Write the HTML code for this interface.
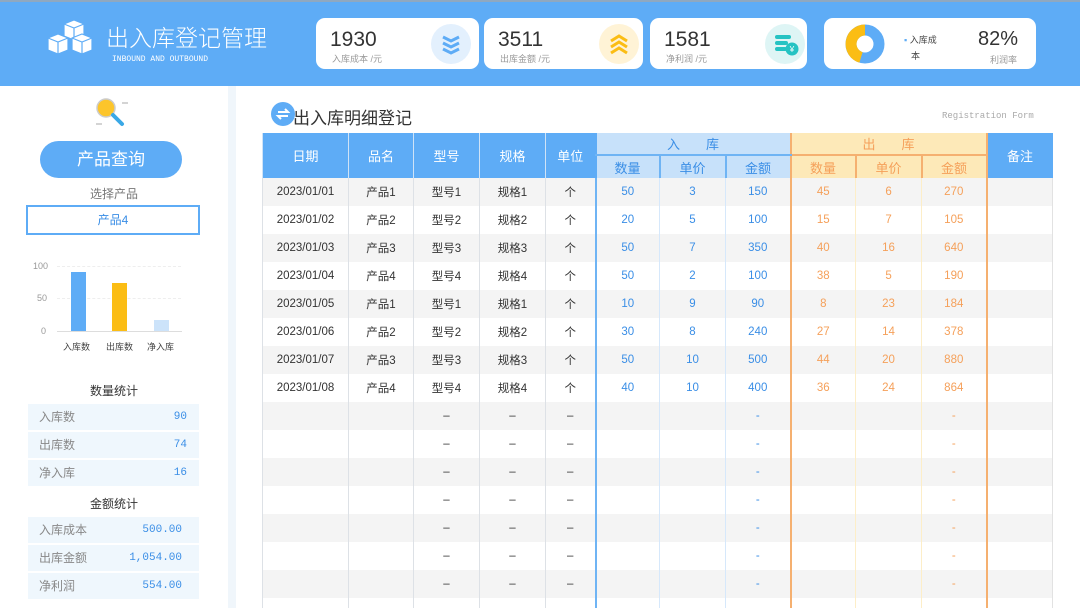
<!DOCTYPE html>
<html style="width:1080px;height:608px;overflow:hidden"><head><meta charset="utf-8"><style>
*{margin:0;padding:0;box-sizing:border-box}
body{width:1080px;height:608px;overflow:hidden;background:#fff;font-family:"Liberation Sans","Noto Sans CJK SC",sans-serif;position:relative}
.abs{position:absolute}
.hdr{left:0;top:0;width:1080px;height:86px;background:#5eacf6;border-top:2px solid #8fa8c0}
.card{background:#fff;border-radius:9px;top:18px;height:51px}
.num{position:absolute;left:14px;top:10px;font-size:21px;color:#333}
.lbl{position:absolute;left:16px;top:34px;font-size:9px;color:#999}
.ic{position:absolute;top:6px;width:40px;height:40px;border-radius:50%}
table{border-collapse:collapse;table-layout:fixed;font-size:12px}
td{text-align:center;height:28px;border-left:1px solid #dde1e6;color:#333;font-family:"Liberation Sans","Noto Sans CJK SC",sans-serif;font-size:11.5px}
tr.g td{background:#f4f4f4}
th{font-weight:normal;color:#fff;background:#5eacf6;border-left:1px solid #cfe3f7;font-size:13px}
.b{color:#3a8ee6}.o{color:#f5a05a}
.sl{left:28px;width:171px;height:26px;background:#eff7fd;font-size:12px;color:#888;line-height:26px}
.sl span{position:absolute;left:11px;top:0}
.sl b{position:absolute;right:12px;top:0;font-weight:normal;color:#3a8ee6;font-family:"Liberation Mono",monospace;font-size:11px}
</style></head><body>
<div class="abs hdr"></div>
<svg class="abs" style="left:46px;top:20px" width="56" height="44" viewBox="0 0 56 44">
<g fill="#fff" stroke="#5eacf6" stroke-width="1.2">
<path d="M18 4 L28 0 L38 4 L38 16 L28 20 L18 16Z"/><path d="M18 4 L28 8 L38 4 M28 8 L28 20" fill="none"/>
<path d="M2 18 L12 14 L22 18 L22 30 L12 34 L2 30Z"/><path d="M2 18 L12 22 L22 18 M12 22 L12 34" fill="none"/>
<path d="M26 18 L36 14 L46 18 L46 30 L36 34 L26 30Z"/><path d="M26 18 L36 22 L46 18 M36 22 L36 34" fill="none"/>
</g></svg>
<div class="abs" style="left:106px;top:19px;font-size:23px;color:#fff;font-family:'Noto Sans CJK SC',sans-serif;font-weight:300">出入库登记管理</div>
<div class="abs" style="left:112px;top:55px;font-size:8px;color:#fff;font-family:'Liberation Mono',monospace">INBOUND AND OUTBOUND</div>

<div class="abs card" style="left:316px;width:163px"><div class="num">1930</div><div class="lbl">入库成本 /元</div>
<div class="ic" style="left:115px;background:#e3f0fd"><svg width="40" height="40"><g fill="none" stroke="#5eacf6" stroke-width="3"><path d="M12 13 L20 17 L28 13 M12 19 L20 23 L28 19 M12 25 L20 29 L28 25"/></g></svg></div></div>
<div class="abs card" style="left:484px;width:159px"><div class="num">3511</div><div class="lbl">出库金额 /元</div>
<div class="ic" style="left:115px;background:#fff3d6"><svg width="40" height="40"><g fill="none" stroke="#fbbd14" stroke-width="3"><path d="M12 17 L20 12 L28 17 M12 23 L20 18 L28 23 M12 29 L20 24 L28 29"/></g></svg></div></div>
<div class="abs card" style="left:650px;width:157px"><div class="num">1581</div><div class="lbl">净利润 /元</div>
<div class="ic" style="left:115px;background:#def5f5"><svg width="40" height="40"><g fill="#25c3c3"><rect x="10" y="11" width="16" height="4" rx="2"/><rect x="10" y="17" width="13" height="4" rx="2"/><rect x="10" y="23" width="12" height="4" rx="2"/><circle cx="27" cy="25" r="6.5"/></g><text x="27" y="28" font-size="8" fill="#fff" text-anchor="middle">¥</text></svg></div></div>
<div class="abs card" style="left:824px;width:212px">
<svg class="abs" style="left:20px;top:5px" width="42" height="42" viewBox="0 0 42 42"><circle cx="21" cy="21" r="14" fill="none" stroke="#5eacf6" stroke-width="11"/><path d="M21 7 A14 14 0 0 0 17 34.4" fill="none" stroke="#fbbd14" stroke-width="11"/></svg>
<div class="abs" style="left:80px;top:15px;font-size:9px;color:#444"><span style="color:#5eacf6">▪</span> 入库成</div><div class="abs" style="left:87px;top:31px;font-size:9px;color:#444">本</div>
<div class="abs" style="left:154px;top:10px;font-size:20px;color:#333">82%</div><div class="abs" style="left:166px;top:35px;font-size:9px;color:#999">利润率</div></div>

<div class="abs" style="left:228px;top:86px;width:8px;height:522px;background:#f0f6fb"></div>
<svg class="abs" style="left:92px;top:94px" width="42" height="40"><circle cx="14" cy="14" r="9" fill="#fcc52b" stroke="#ccc" stroke-width="1.5"/><path d="M21 21 L30 30" stroke="#3aa8e6" stroke-width="4" stroke-linecap="round"/><path d="M30 9h6M4 30h6" stroke="#aaa"/></svg>
<div class="abs" style="left:40px;top:141px;width:142px;height:37px;border-radius:19px;background:#5eacf6;color:#fff;font-size:17px;text-align:center;line-height:37px">产品查询</div>
<div class="abs" style="left:0;top:185px;width:228px;text-align:center;font-size:12px;color:#777">选择产品</div>
<div class="abs" style="left:26px;top:205px;width:174px;height:30px;border:2px solid #5eacf6;text-align:center;line-height:26px;font-size:12px;color:#3a8ee6">产品4</div>
<div class="abs" style="left:33px;top:261px;font-size:9px;color:#999">100</div>
<div class="abs" style="left:37px;top:293px;font-size:9px;color:#999">50</div>
<div class="abs" style="left:41px;top:326px;font-size:9px;color:#999">0</div>
<div class="abs" style="left:57px;top:266px;width:124px;border-top:1px dashed #eee"></div>
<div class="abs" style="left:57px;top:298px;width:124px;border-top:1px dashed #eee"></div>
<div class="abs" style="left:57px;top:331px;width:125px;border-top:1px solid #ddd"></div>
<div class="abs" style="left:71px;top:272px;width:15px;height:59px;background:#5eacf6"></div>
<div class="abs" style="left:112px;top:283px;width:15px;height:48px;background:#fbbd14"></div>
<div class="abs" style="left:154px;top:320px;width:15px;height:11px;background:#cce3fa"></div>
<div class="abs" style="left:63px;top:340px;font-size:9px;color:#444">入库数</div>
<div class="abs" style="left:106px;top:340px;font-size:9px;color:#444">出库数</div>
<div class="abs" style="left:147px;top:340px;font-size:9px;color:#444">净入库</div>

<div class="abs" style="left:0;top:382px;width:228px;text-align:center;font-size:12px;color:#333">数量统计</div>
<div class="abs sl" style="top:404px"><span>入库数</span><b>90</b></div>
<div class="abs sl" style="top:432px"><span>出库数</span><b>74</b></div>
<div class="abs sl" style="top:460px"><span>净入库</span><b>16</b></div>
<div class="abs" style="left:0;top:495px;width:228px;text-align:center;font-size:12px;color:#333">金额统计</div>
<div class="abs sl" style="top:517px"><span>入库成本</span><b style="right:17px">500.00</b></div>
<div class="abs sl" style="top:545px"><span>出库金额</span><b style="right:17px">1,054.00</b></div>
<div class="abs sl" style="top:573px"><span>净利润</span><b style="right:17px">554.00</b></div>

<svg class="abs" style="left:271px;top:102px" width="24" height="24"><circle cx="12" cy="12" r="12" fill="#5eacf6"/><path d="M7 10h10l-3-3M17 14H7l3 3" fill="none" stroke="#fff" stroke-width="2"/></svg>
<div class="abs" style="left:293px;top:104px;font-size:17px;color:#333">出入库明细登记</div>
<div class="abs" style="left:942px;top:111px;font-size:9px;color:#aaa;font-family:'Liberation Mono',monospace">Registration Form</div>

<div class="abs" style="left:262px;top:133px;width:791px;height:475px;overflow:hidden">
<table style="width:790px">
<colgroup><col style="width:86px"><col style="width:65px"><col style="width:66px"><col style="width:66px"><col style="width:50px"><col style="width:64px"><col style="width:66px"><col style="width:65px"><col style="width:65px"><col style="width:66px"><col style="width:65px"><col style="width:66px"></colgroup>
<tr style="height:22px"><th rowspan="2">日期</th><th rowspan="2">品名</th><th rowspan="2">型号</th><th rowspan="2">规格</th><th rowspan="2">单位</th>
<th colspan="3" style="background:#c7e1fa;color:#3a8ee6;border-left:2px solid #5eacf6;border-bottom:2px solid #6fb4f4">入　　库</th>
<th colspan="3" style="background:#fde9b8;color:#f5a05a;border-left:2px solid #f5b070;border-bottom:2px solid #f5b070">出　　库</th><th rowspan="2" style="border-left:2px solid #f5b070">备注</th></tr>
<tr style="height:23px"><th style="background:#c7e1fa;color:#3a8ee6;border-left:2px solid #5eacf6">数量</th><th style="background:#c7e1fa;color:#3a8ee6;border-left:2px solid #6fb4f4">单价</th><th style="background:#c7e1fa;color:#3a8ee6;border-left:2px solid #6fb4f4">金额</th>
<th style="background:#fde9b8;color:#f5a05a;border-left:2px solid #f5b070">数量</th><th style="background:#fde9b8;color:#f5a05a;border-left:2px solid #f5b070">单价</th><th style="background:#fde9b8;color:#f5a05a;border-left:2px solid #f5b070">金额</th></tr>
<tbody id="tb"></tbody>
</table></div>
<script>
var d=[["2023/01/01",1,50,3,150,45,6,270],["2023/01/02",2,20,5,100,15,7,105],["2023/01/03",3,50,7,350,40,16,640],["2023/01/04",4,50,2,100,38,5,190],["2023/01/05",1,10,9,90,8,23,184],["2023/01/06",2,30,8,240,27,14,378],["2023/01/07",3,50,10,500,44,20,880],["2023/01/08",4,40,10,400,36,24,864]];
var h="";
for(var i=0;i<16;i++){var r=d[i];var c=i%2==0?' class="g"':'';
var bl='style="border-left:2px solid #6fb4f4"',bl2='style="border-left:1px solid #d6e8fb"',ol='style="border-left:2px solid #f5b070"',ol2='style="border-left:1px solid #fdeec8"';
if(r){h+="<tr"+c+"><td>"+r[0]+"</td><td>产品"+r[1]+"</td><td>型号"+r[1]+"</td><td>规格"+r[1]+"</td><td>个</td><td class=b "+bl+">"+r[2]+"</td><td class=b "+bl2+">"+r[3]+"</td><td class=b "+bl2+">"+r[4]+"</td><td class=o "+ol+">"+r[5]+"</td><td class=o "+ol2+">"+r[6]+"</td><td class=o "+ol2+">"+r[7]+"</td><td "+ol+"></td></tr>";}
else{h+="<tr"+c+"><td></td><td></td><td>–</td><td>–</td><td>–</td><td "+bl+"></td><td "+bl2+"></td><td class=b "+bl2+">-</td><td "+ol+"></td><td "+ol2+"></td><td class=o "+ol2+">-</td><td "+ol+"></td></tr>";}}
document.getElementById("tb").innerHTML=h;
</script>
<div class="abs" style="left:1052px;top:178px;width:1px;height:430px;background:#e2e2e2"></div>
</body></html>
